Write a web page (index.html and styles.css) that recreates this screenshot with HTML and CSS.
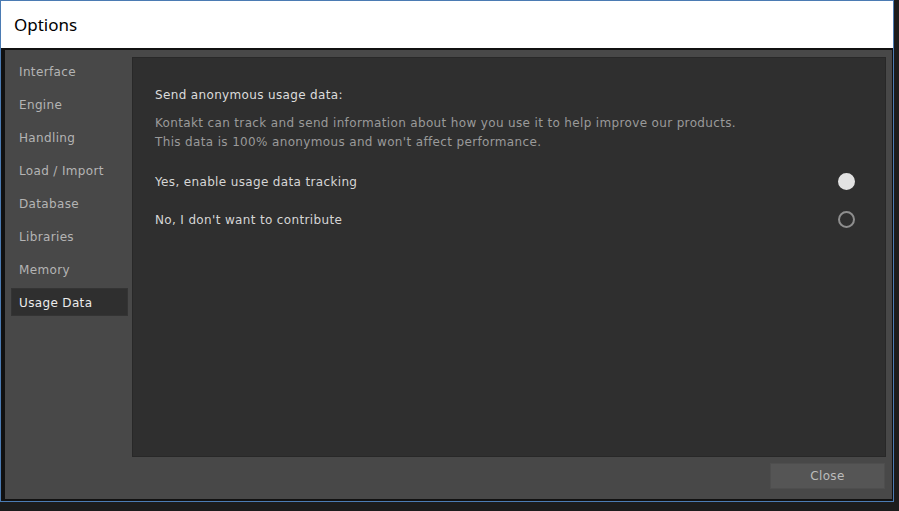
FILE: index.html
```html
<!DOCTYPE html>
<html lang="en">

<head>
    <meta charset="UTF-8">
    <meta name="viewport" content="width=device-width, initial-scale=1.0">
    <title>Options</title>
    <link rel="stylesheet" href="styles.css">
</head>

<body>
    <div class="window">
        <div class="titlebar">Options</div>
        <div class="client">
            <ul class="nav">
                <li>Interface</li>
                <li>Engine</li>
                <li>Handling</li>
                <li>Load / Import</li>
                <li>Database</li>
                <li>Libraries</li>
                <li>Memory</li>
                <li class="active">Usage Data</li>
            </ul>

            <div class="main">
                <div class="panel">
                    <h2>Send anonymous usage data:</h2>
                    <p class="desc">Kontakt can track and send information about how you use it to help improve our products.<br>
                        This data is 100% anonymous and won't affect performance.</p>

                    <div class="choice">
                        <span>Yes, enable usage data tracking</span>
                        <span class="radio checked"></span>
                    </div>
                    <div class="choice">
                        <span>No, I don't want to contribute</span>
                        <span class="radio"></span>
                    </div>
                </div>
                <div class="footer">
                    <button class="close-btn">Close</button>
                </div>
            </div>
        </div>
    </div>
</body>

</html>
```

FILE: styles.css
```css
body {
    margin: 0;
    width: 899px;
    height: 511px;
    overflow: hidden;
    background-color: #1c1c1c;
    font-family: 'DejaVu Sans', sans-serif;
}

.window {
    width: 892px;
    height: 500px;
    border: 1px solid #4b7bb3;
    display: flex;
    flex-direction: column;
    background-color: #111;
}

.titlebar {
    height: 47px;
    background-color: #fff;
    color: #000;
    font-family: 'Noto Sans', sans-serif;
    font-size: 17px;
    line-height: 48px;
    padding-left: 13px;
}

.client {
    flex: 1;
    margin: 2px 1px 2px 4px;
    background-color: #484848;
    display: flex;
    gap: 4px;
    padding: 7px 6px 8px 6px;
    letter-spacing: 0.35px;
}

.nav {
    list-style: none;
    margin: 0;
    padding: 0;
    width: 117px;
}

.nav li {
    height: 27px;
    padding-top: 1px;
    line-height: 28px;
    margin-bottom: 5px;
    padding-left: 8px;
    font-size: 12px;
    color: #b4b4b4;
}

.nav li.active {
    background-color: #2f2f2f;
    color: #ececec;
    box-shadow: inset 0 0 0 1px #343434;
}

.main {
    flex: 1;
    display: flex;
    flex-direction: column;
}

.panel {
    height: 400px;
    box-sizing: border-box;
    background-color: #2f2f2f;
    border: 1px solid #282828;
    padding: 28px 30px 0 22px;
}

h2 {
    margin: 0;
    font-size: 12px;
    font-weight: normal;
    line-height: 19px;
    color: #dcdcdc;
}

.desc {
    margin: 9px 0 20px 0;
    font-size: 12px;
    line-height: 19px;
    color: #9a9a9a;
}

.choice {
    display: flex;
    justify-content: space-between;
    align-items: center;
    height: 19px;
    margin-bottom: 19px;
    font-size: 12px;
    color: #d6d6d6;
}

.radio {
    width: 17px;
    height: 17px;
    box-sizing: border-box;
    border-radius: 50%;
    border: 2px solid #8e8e8e;
}

.radio.checked {
    background-color: #e2e2e2;
    border-color: #e2e2e2;
}

.footer {
    flex: 1;
    display: flex;
    justify-content: flex-end;
    align-items: flex-start;
    padding-top: 6px;
}

.close-btn {
    width: 115px;
    height: 26px;
    margin-right: 1px;
    background-color: #555;
    border: 1px solid #4e4e4e;
    color: #bcbcbc;
    font-family: inherit;
    font-size: 12px;
    letter-spacing: 0.35px;
    cursor: pointer;
}
```
